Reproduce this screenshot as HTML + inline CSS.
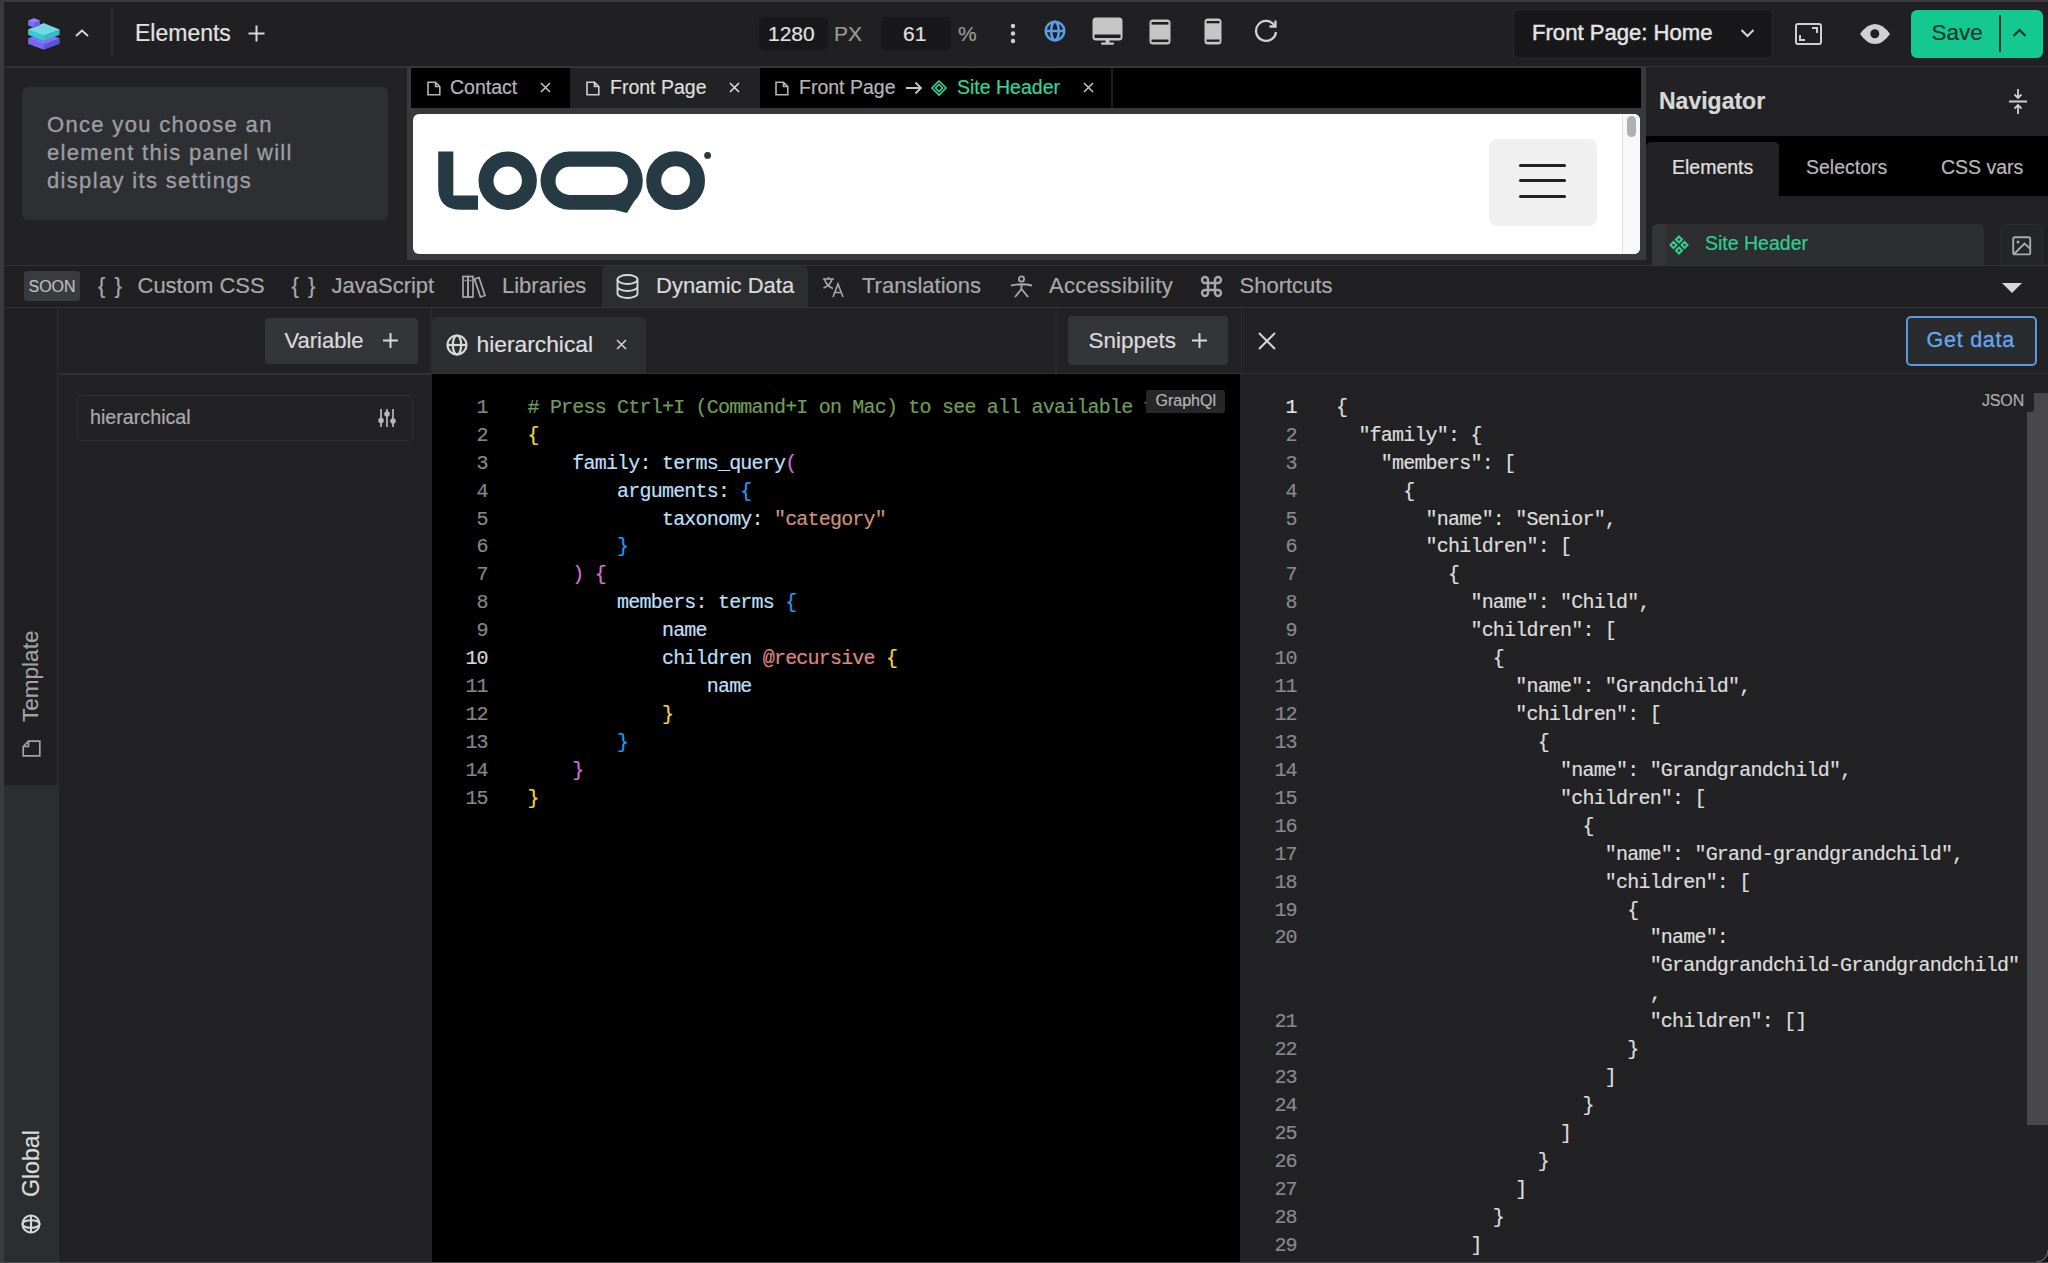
<!DOCTYPE html>
<html><head><meta charset="utf-8">
<style>
*{box-sizing:border-box}
html,body{margin:0;padding:0}
body{width:2048px;height:1263px;overflow:hidden;position:relative;background:#222224;font-family:"Liberation Sans",sans-serif;color:#a9a9ab}
.a{position:absolute}
.t{position:absolute;white-space:nowrap;line-height:1;-webkit-text-stroke:0.2px currentColor}
.m{font-family:"Liberation Mono",monospace}
svg{position:absolute;overflow:visible}
</style></head><body>

<!-- ===== TOP BAR ===== -->
<div class="a" style="left:0;top:0;width:2048px;height:68px;background:#202022;border-bottom:2px solid #333336"></div>
<!-- logo -->
<svg style="left:0;top:0" width="70" height="60" viewBox="0 0 70 60">
  <path d="M43.75 32.5L59.4 38.5V43.8L43.75 49.6L28.3 43.8V38.5Z" fill="#6e64e6"/><path d="M43.75 32.5L59.4 38.5L43.75 44.5L28.3 38.5Z" fill="#7c72f2"/>
  <path d="M28.3 38.5L43.75 44.5V49.6L28.3 43.8Z" fill="#7469ee"/>
  <path d="M59.4 38.5L43.75 44.5V49.6L59.4 43.8Z" fill="#5e52d6"/>
  <path d="M43.75 23.3L59.4 29.6V34.8L43.75 40.6L28.3 34.8V29.6Z" fill="#3ac0cc"/><path d="M43.75 23.3L59.4 29.6L43.75 35.6L28.3 29.6Z" fill="#72d9e2"/>
  <path d="M28.3 29.6L43.75 35.6V40.6L28.3 34.8Z" fill="#38c8d8"/>
  <path d="M59.4 29.6L43.75 35.6V40.6L59.4 34.8Z" fill="#3ab8c4"/>
  <path d="M34 18.3L39.8 20.6V25.3L34 27.5L28.3 25.3V20.6Z" fill="#7268e8"/><path d="M34 18.3L39.8 20.6L34 22.9L28.3 20.6Z" fill="#8a82f4"/>
  <path d="M28.3 20.6L34 22.9V27.5L28.3 25.3Z" fill="#7a70f0"/>
  <path d="M39.8 20.6L34 22.9V27.5L39.8 25.3Z" fill="#6a5fe0"/>
</svg>
<svg style="left:74px;top:28px" width="16" height="10" viewBox="0 0 16 10"><path d="M2 8 L8 2.5 L14 8" fill="none" stroke="#d8d8d8" stroke-width="2"/></svg>
<div class="a" style="left:111px;top:9px;width:2px;height:48px;background:#2e2e31;border-radius:1px"></div>
<div class="t" style="left:135px;top:22px;font-size:23px;color:#e2e2e2">Elements</div>
<svg style="left:247px;top:24px" width="19" height="19" viewBox="0 0 19 19"><path d="M9.5 1.5V17.5M1.5 9.5H17.5" stroke="#d8d8d8" stroke-width="2"/></svg>

<!-- px / zoom -->
<div class="a" style="left:759px;top:17px;width:69px;height:33px;background:#18181a;border-radius:5px"></div>
<div class="t" style="left:768px;top:23px;font-size:21px;color:#e0e0e0">1280</div>
<div class="t" style="left:834px;top:23px;font-size:21px;color:#9a9a9c">PX</div>
<div class="a" style="left:881px;top:17px;width:70px;height:33px;background:#18181a;border-radius:5px"></div>
<div class="t" style="left:903px;top:23px;font-size:21px;color:#e0e0e0">61</div>
<div class="t" style="left:958px;top:23px;font-size:21px;color:#9a9a9c">%</div>
<svg style="left:1009px;top:22px" width="8" height="24" viewBox="0 0 8 24"><circle cx="4" cy="4" r="2.2" fill="#cfcfcf"/><circle cx="4" cy="11.5" r="2.2" fill="#cfcfcf"/><circle cx="4" cy="19" r="2.2" fill="#cfcfcf"/></svg>
<!-- globe -->
<svg style="left:1044px;top:20px" width="22" height="22" viewBox="0 0 22 22" fill="none" stroke="#5b9ee8" stroke-width="2.5"><circle cx="11" cy="11" r="9.3"/><ellipse cx="11" cy="11" rx="3.8" ry="9.3"/><path d="M1.7 11H20.3"/></svg>
<!-- desktop -->
<svg style="left:1092px;top:17px" width="31" height="28" viewBox="0 0 31 28"><rect x="0.5" y="0.5" width="30" height="23" rx="3.5" fill="#c6c6c6"/><rect x="2.5" y="17.5" width="26" height="3.5" fill="#202022"/><rect x="13.5" y="23" width="4" height="3" fill="#c6c6c6"/><rect x="9" y="25.5" width="13" height="2.3" rx="1" fill="#c6c6c6"/></svg>
<!-- tablet -->
<svg style="left:1149px;top:19px" width="22" height="26" viewBox="0 0 22 26"><rect x="0.5" y="0.5" width="21" height="25" rx="3.5" fill="#c6c6c6"/><rect x="2.5" y="3" width="17" height="2.6" fill="#202022"/><rect x="2.5" y="20.5" width="17" height="2.6" fill="#202022"/></svg>
<!-- phone -->
<svg style="left:1204px;top:18px" width="18" height="27" viewBox="0 0 18 27"><rect x="0.5" y="0.5" width="17" height="26" rx="3.5" fill="#c6c6c6"/><rect x="2.5" y="3" width="13" height="2.3" fill="#202022"/><rect x="2.5" y="21.5" width="13" height="2.3" fill="#202022"/></svg>
<!-- refresh -->
<svg style="left:1254px;top:19px" width="26" height="25" viewBox="0 0 26 25" fill="none" stroke="#d2d2d2" stroke-width="2.3"><path d="M20.5 6.5 A10 10 0 1 0 22 13"/><path d="M21.5 1.5 V7.5 H15.5"/></svg>

<!-- page select -->
<div class="a" style="left:1513px;top:9px;width:260px;height:50px;background:#18181a;border:1px solid #2b2b2e;border-radius:6px"></div>
<div class="t" style="left:1532px;top:22px;font-size:22.1px;-webkit-text-stroke:0.45px #e4e4e4;color:#e4e4e4">Front Page: Home</div>
<svg style="left:1740px;top:28px" width="15" height="10" viewBox="0 0 15 10"><path d="M1.5 2 L7.5 8 L13.5 2" fill="none" stroke="#d8d8d8" stroke-width="2"/></svg>
<!-- fullscreen -->
<svg style="left:1795px;top:23px" width="27" height="22" viewBox="0 0 27 22" fill="none" stroke="#cfcfcf" stroke-width="2"><rect x="1" y="1" width="25" height="20" rx="2"/><path d="M5 12V17H10M17 5H22V10"/></svg>
<!-- eye -->
<svg style="left:1859px;top:23px" width="32" height="22" viewBox="0 0 32 22"><path d="M1 11 Q8 1 16 1 Q24 1 31 11 Q24 21 16 21 Q8 21 1 11Z" fill="#d0d0d0"/><circle cx="15.8" cy="10.8" r="4.5" fill="#202022"/></svg>
<!-- save -->
<div class="a" style="left:1911px;top:10px;width:132px;height:48px;background:#14c98f;border-radius:6px"></div>
<div class="t" style="left:1931.5px;top:21.6px;font-size:22.5px;color:#123a2b">Save</div>
<div class="a" style="left:1999px;top:15px;width:2px;height:37px;background:#16352a"></div>
<svg style="left:2012px;top:28px" width="15" height="10" viewBox="0 0 15 10"><path d="M1.5 8 L7.5 2 L13.5 8" fill="none" stroke="#16352a" stroke-width="2.2"/></svg>


<!-- ===== LEFT SETTINGS PANEL ===== -->
<div class="a" style="left:22px;top:87px;width:366px;height:133px;background:#2e2f32;border-radius:6px"></div>
<div class="t" style="left:47px;top:111.3px;font-size:22px;line-height:28px;color:#9c9da3;white-space:normal;width:340px;letter-spacing:1.33px;-webkit-text-stroke:0.35px #9c9da3">Once you choose an<br>element this panel will<br>display its settings</div>

<!-- ===== CANVAS ===== -->
<div class="a" style="left:407px;top:67px;width:1239px;height:193px;background:#38393b"></div>
<div class="a" style="left:411px;top:68px;width:1230px;height:40px;background:#000"></div>
<!-- tab: contact -->
<svg style="left:427px;top:81px" width="14" height="15" viewBox="0 0 14 15" fill="none" stroke="#b3b3b3" stroke-width="1.6"><path d="M1 1.2H8.5L12.8 5.5V13.8H1Z M8.5 1.2V5.5H12.8"/></svg>
<div class="t" style="left:450px;top:78px;font-size:19.5px;color:#b5b5b7">Contact</div>
<svg style="left:540px;top:82px" width="11" height="11" viewBox="0 0 11 11"><path d="M1 1L10 10M10 1L1 10" stroke="#c0c0c0" stroke-width="1.6"/></svg>
<!-- tab: front page active -->
<div class="a" style="left:570px;top:68px;width:190px;height:40px;background:#222224"></div>
<svg style="left:586px;top:81px" width="14" height="15" viewBox="0 0 14 15" fill="none" stroke="#d0d0d0" stroke-width="1.6"><path d="M1 1.2H8.5L12.8 5.5V13.8H1Z M8.5 1.2V5.5H12.8"/></svg>
<div class="t" style="left:610px;top:78px;font-size:19.5px;color:#dedede">Front Page</div>
<svg style="left:729px;top:82px" width="11" height="11" viewBox="0 0 11 11"><path d="M1 1L10 10M10 1L1 10" stroke="#dcdcdc" stroke-width="1.6"/></svg>
<!-- tab: site header -->
<svg style="left:775px;top:81px" width="14" height="15" viewBox="0 0 14 15" fill="none" stroke="#b3b3b3" stroke-width="1.6"><path d="M1 1.2H8.5L12.8 5.5V13.8H1Z M8.5 1.2V5.5H12.8"/></svg>
<div class="t" style="left:799px;top:78px;font-size:19.5px;color:#b5b5b7">Front Page</div>
<svg style="left:905px;top:81px" width="18" height="14" viewBox="0 0 18 14" fill="none" stroke="#c8c8c8" stroke-width="1.8"><path d="M1 7H16M10.5 1.5L16 7L10.5 12.5"/></svg>
<svg style="left:931px;top:80px" width="16" height="16" viewBox="0 0 16 16" fill="none" stroke="#35d399" stroke-width="1.6"><path d="M8 1L15 8L8 15L1 8Z M8 4.5L11.5 8L8 11.5L4.5 8Z"/></svg>
<div class="t" style="left:957px;top:78px;font-size:19.5px;color:#35d399">Site Header</div>
<svg style="left:1083px;top:82px" width="11" height="11" viewBox="0 0 11 11"><path d="M1 1L10 10M10 1L1 10" stroke="#c0c0c0" stroke-width="1.6"/></svg>
<div class="a" style="left:1111px;top:68px;width:2px;height:40px;background:#1c1c1e"></div>
<!-- preview -->
<div class="a" style="left:413px;top:114px;width:1227px;height:140px;background:#fff;border-radius:6px;overflow:hidden">
  <div class="a" style="left:1209px;top:0;width:18px;height:140px;background:#f8f8f8;border-left:1px solid #e4e4e4"></div>
  <div class="a" style="left:1214px;top:2px;width:9px;height:21px;background:#b0b0b0;border-radius:5px"></div>
  <div class="a" style="left:1076px;top:25px;width:108px;height:87px;background:#f0f0f0;border-radius:8px"></div>
  <div class="a" style="left:1106px;top:50px;width:47px;height:3px;background:#222;border-radius:2px"></div>
  <div class="a" style="left:1106px;top:65px;width:47px;height:3px;background:#222;border-radius:2px"></div>
  <div class="a" style="left:1106px;top:81px;width:47px;height:3px;background:#222;border-radius:2px"></div>
</div>
<!-- logo LOQO -->
<svg style="left:437px;top:150px" width="280" height="66" viewBox="437 150 280 66">
  <path d="M438.2 151.6H453.3V195.4H478V209.8H461Q438.2 209.8 438.2 187Z" fill="#263a43"/>
  <circle cx="507.7" cy="180.7" r="21.7" fill="none" stroke="#263a43" stroke-width="15"/>
  <path d="M569.6 151.6H613.8A29.1 29.1 0 0 1 642.8 180.7A29.1 29.1 0 0 1 634 201.5L627 213L614 209.8H569.6A29.1 29.1 0 0 1 569.6 151.6Z M569.6 166.8A14.1 14.1 0 0 0 569.6 195H613.8A14.1 14.1 0 0 0 613.8 166.8Z" fill="#263a43" fill-rule="evenodd"/>
  <circle cx="675.6" cy="180.7" r="21.9" fill="none" stroke="#263a43" stroke-width="15"/>
  <circle cx="707.6" cy="155.4" r="3.4" fill="#263a43"/>
</svg>

<!-- ===== NAVIGATOR ===== -->
<div class="a" style="left:1646px;top:67px;width:402px;height:198px;background:#222224"></div>
<div class="t" style="left:1659px;top:89.5px;font-size:23px;font-weight:bold;color:#d8d8d8">Navigator</div>
<svg style="left:2008px;top:88px" width="20" height="27" viewBox="0 0 20 27" fill="none" stroke="#cfcfcf" stroke-width="1.8"><path d="M1 13.5H19M10 1V10M6.5 6.5L10 10L13.5 6.5M10 26V17M6.5 20.5L10 17L13.5 20.5"/></svg>
<div class="a" style="left:1646px;top:136px;width:402px;height:60px;background:#000"></div>
<div class="a" style="left:1646px;top:142px;width:133px;height:54px;background:#222224;border-radius:5px 5px 0 0"></div>
<div class="t" style="left:1672px;top:158px;font-size:19.5px;color:#e0e0e0">Elements</div>
<div class="t" style="left:1806px;top:158px;font-size:19.5px;color:#b8b8ba">Selectors</div>
<div class="t" style="left:1941px;top:158px;font-size:19.5px;color:#b8b8ba">CSS vars</div>
<div class="a" style="left:1652px;top:224px;width:332px;height:44px;background:#2d2e30;border-radius:6px 6px 0 0"></div>
<div class="a" style="left:1652px;top:224px;width:14px;height:44px;background:#333437;border-radius:6px 0 0 0"></div>
<svg style="left:1669px;top:235px" width="20" height="20" viewBox="0 0 20 20" fill="none" stroke="#2fce8f" stroke-width="2"><path d="M10 1.5L13 4.5L10 7.5L7 4.5Z M10 12.5L13 15.5L10 18.5L7 15.5Z M4.5 7L7.5 10L4.5 13L1.5 10Z M15.5 7L18.5 10L15.5 13L12.5 10Z"/></svg>
<div class="t" style="left:1705px;top:234px;font-size:19.5px;color:#2fce8f">Site Header</div>
<div class="a" style="left:2000px;top:224px;width:43px;height:44px;background:#242527;border-radius:5px;border:1px solid #2b2c2e"></div>
<svg style="left:2012px;top:236px" width="20" height="20" viewBox="0 0 20 20" fill="none" stroke="#ababaf" stroke-width="1.9"><rect x="1.2" y="1.2" width="17" height="17.2" rx="1.5"/><path d="M2 18L12.5 7.5L18 12.5"/><circle cx="6" cy="6" r="1.5" fill="#ababaf" stroke="none"/></svg>


<!-- ===== BOTTOM TOOLBAR ===== -->
<div class="a" style="left:0;top:264.5px;width:2048px;height:43.5px;background:#202022;border-top:1.5px solid #343437;border-bottom:1.5px solid #343437"></div>
<div class="a" style="left:24px;top:271px;width:56px;height:30px;background:#3a3b3e;border-radius:3px"></div>
<div class="t" style="left:28.5px;top:278.5px;font-size:16px;color:#bdbdbf">SOON</div>
<div class="t" style="left:98px;top:274.5px;font-size:22px;color:#a9a9ab;letter-spacing:1.5px">{ }</div>
<div class="t" style="left:137.5px;top:274.5px;font-size:22px;color:#a9a9ab">Custom CSS</div>
<div class="t" style="left:291.5px;top:274.5px;font-size:22px;color:#a9a9ab;letter-spacing:1.5px">{ }</div>
<div class="t" style="left:331.5px;top:274.5px;font-size:22px;color:#a9a9ab">JavaScript</div>
<svg style="left:462px;top:275px" width="24" height="23" viewBox="0 0 24 23" fill="none" stroke="#a9a9ab" stroke-width="1.7"><rect x="1" y="1.5" width="5" height="20.5"/><rect x="6" y="1.5" width="5" height="20.5"/><path d="M2.5 5.5H4.5M7.5 5.5H9.5"/><path d="M12.5 4L17 2.5L23 20.5L18.5 22Z"/></svg>
<div class="t" style="left:502px;top:274.5px;font-size:22px;color:#a9a9ab">Libraries</div>
<div class="a" style="left:602px;top:266px;width:206px;height:41px;background:#2c2d2f;border-radius:5px 5px 0 0"></div>
<svg style="left:616px;top:274px" width="23" height="25" viewBox="0 0 23 25" fill="none" stroke="#d6d6d6" stroke-width="1.9"><ellipse cx="11.5" cy="5.5" rx="10" ry="4.5"/><path d="M1.5 5.5V19.5C1.5 22 6 24 11.5 24C17 24 21.5 22 21.5 19.5V5.5M1.5 12.5C1.5 15 6 17 11.5 17C17 17 21.5 15 21.5 12.5"/></svg>
<div class="t" style="left:656px;top:274.5px;font-size:22px;color:#dadadc">Dynamic Data</div>
<svg style="left:822px;top:276px" width="23" height="22" viewBox="0 0 23 22" fill="none" stroke="#a9a9ab" stroke-width="1.6"><path d="M1 3H12M6.5 1V3M2.5 3C4 8 7 11 11 12.5M10 3C9 7 5.5 10.5 1.5 12M11 21L16 8L21 21M12.8 16.5H19.2"/></svg>
<div class="t" style="left:862px;top:274.5px;font-size:22px;color:#a9a9ab">Translations</div>
<svg style="left:1010px;top:275px" width="23" height="23" viewBox="0 0 23 23" fill="none" stroke="#a9a9ab" stroke-width="1.8"><circle cx="11.5" cy="4" r="2.6"/><path d="M1 10.5Q11.5 8 22 10.5M11.5 9.5V14M11.5 14L5 22M11.5 14L18 22"/></svg>
<div class="t" style="left:1049px;top:274.5px;font-size:22px;color:#a9a9ab;letter-spacing:0.33px">Accessibility</div>
<svg style="left:1200px;top:275px" width="23" height="23" viewBox="0 0 23 23" fill="none" stroke="#a9a9ab" stroke-width="2.4"><path d="M8 8V15M15 8V15M8 8H15M8 15H15M8 8H5A3 3 0 1 1 8 5ZM15 8H18A3 3 0 1 0 15 5ZM8 15H5A3 3 0 1 0 8 18ZM15 15H18A3 3 0 1 1 15 18Z"/></svg>
<div class="t" style="left:1239.5px;top:274.5px;font-size:22px;color:#a9a9ab">Shortcuts</div>
<svg style="left:2001px;top:282px" width="22" height="12" viewBox="0 0 22 12"><path d="M1 1H21L11 11Z" fill="#d8d8d8"/></svg>

<!-- ===== DYNAMIC DATA PANEL ===== -->
<!-- left vertical strip -->
<div class="a" style="left:0;top:308px;width:58px;height:955px;background:#202022;border-right:1.5px solid #313134"></div>
<div class="a" style="left:0;top:785px;width:59px;height:478px;background:#2c2d2f"></div>
<div class="t" style="left:-19px;top:664.5px;font-size:22.5px;color:#a3a3a5;transform:rotate(-90deg);transform-origin:center center;width:100px;text-align:center">Template</div>
<svg style="left:22px;top:740px" width="19" height="17" viewBox="0 0 19 17" fill="none" stroke="#a3a3a5" stroke-width="1.7"><path d="M1.2 15.8H17.8V1.2H6.5L1.2 6.5Z M1.2 6.5H6.5V1.2"/></svg>
<div class="t" style="left:-18px;top:1152px;font-size:23.2px;color:#d8d8d8;transform:rotate(-90deg);transform-origin:center center;width:100px;text-align:center">Global</div>
<svg style="left:21px;top:1214px" width="20" height="20" viewBox="0 0 20 20" fill="none" stroke="#d6d6d6" stroke-width="2.1"><circle cx="10" cy="10" r="8.5"/><ellipse cx="10" cy="10" rx="8.5" ry="3.8"/><path d="M10 1.5V18.5"/></svg>

<!-- variables column -->
<div class="a" style="left:59px;top:373px;width:372px;height:1.5px;background:#313134"></div>
<div class="a" style="left:265px;top:318px;width:153px;height:46px;background:#343538;border-radius:4px"></div>
<div class="t" style="left:284.5px;top:329.5px;font-size:22px;color:#dadadc">Variable</div>
<svg style="left:382px;top:332px" width="17" height="17" viewBox="0 0 17 17"><path d="M8.5 1V16M1 8.5H16" stroke="#d8d8d8" stroke-width="2"/></svg>
<div class="a" style="left:77px;top:395px;width:336px;height:46px;border:1.5px solid #2f3032;border-radius:5px"></div>
<div class="t" style="left:90px;top:407.5px;font-size:19.7px;color:#ababad">hierarchical</div>
<svg style="left:378px;top:408px" width="18" height="20" viewBox="0 0 18 20" fill="none" stroke="#b8b8ba" stroke-width="1.7"><path d="M3 1V19M9 1V19M15 1V19"/><circle cx="3" cy="12.5" r="1.9" fill="#b8b8ba"/><circle cx="9" cy="6" r="1.9" fill="#b8b8ba"/><circle cx="15" cy="13" r="1.9" fill="#b8b8ba"/></svg>
<div class="a" style="left:430px;top:308px;width:1.5px;height:66px;background:#2a2a2d"></div>

<!-- editor tab header -->
<div class="a" style="left:431.5px;top:317px;width:214px;height:56px;background:#2d2e30;border-radius:5px 5px 0 0"></div>
<svg style="left:446px;top:334px" width="22" height="22" viewBox="0 0 22 22" fill="none" stroke="#d8d8d8" stroke-width="2.2"><circle cx="11" cy="11" r="9.5"/><ellipse cx="11" cy="11" rx="4.2" ry="9.5"/><path d="M1.5 11H20.5"/></svg>
<div class="t" style="left:476.5px;top:333px;font-size:22.8px;color:#dedee0">hierarchical</div>
<svg style="left:616px;top:339px" width="11" height="11" viewBox="0 0 11 11"><path d="M1 1L10 10M10 1L1 10" stroke="#d0d0d0" stroke-width="1.6"/></svg>
<div class="a" style="left:1055px;top:308px;width:1.5px;height:66px;background:#2a2a2d"></div>
<div class="a" style="left:1068px;top:316px;width:160px;height:49px;background:#343538;border-radius:4px"></div>
<div class="t" style="left:1088.5px;top:330px;font-size:22.5px;color:#dadadc">Snippets</div>
<svg style="left:1191px;top:332px" width="17" height="17" viewBox="0 0 17 17"><path d="M8.5 1V16M1 8.5H16" stroke="#d8d8d8" stroke-width="2"/></svg>
<div class="a" style="left:1240.5px;top:308px;width:1.5px;height:66px;background:#2a2a2d"></div>
<div class="a" style="left:431.5px;top:372.5px;width:1617px;height:1.5px;background:#313134"></div>

<!-- graphql editor -->
<div class="a" style="left:431.5px;top:374px;width:808.5px;height:889px;background:#000"></div>

<!-- json panel -->
<svg style="left:1258px;top:332px" width="18" height="18" viewBox="0 0 18 18"><path d="M1 1L17 17M17 1L1 17" stroke="#d4d4d4" stroke-width="2"/></svg>
<div class="a" style="left:1906px;top:315.5px;width:131px;height:50px;background:#2a2b2d;border:2px solid #5b9ae0;border-radius:5px"></div>
<div class="t" style="left:1926.5px;top:329.5px;font-size:21.5px;letter-spacing:0.75px;color:#64a6f0;-webkit-text-stroke:0.3px #64a6f0">Get data</div>
<div class="a" style="left:2027px;top:393px;width:21px;height:732px;background:#48484a;border-radius:3px 0 0 0"></div>
<div class="a" style="left:1976px;top:391px;width:57.5px;height:21px;background:#222224;border-radius:0 0 3px 0"></div>
<div class="t" style="left:1982px;top:392.6px;font-size:16px;letter-spacing:-0.15px;color:#acacb0">JSON</div>

<!-- CODE START -->
<!-- code: graphql -->
<div class="a m" style="left:431.5px;top:374px;width:808.5px;height:889px;overflow:hidden">
<div class="t" style="left:16.3px;top:19.80px;width:40px;text-align:right;font-size:20px;line-height:27.93px;letter-spacing:-0.8px;color:#858587">1</div>
<div class="t" style="left:96.0px;top:19.80px;font-size:20px;line-height:27.93px;letter-spacing:-0.8px;white-space:pre"><span style="color:#6f9c5b"># Press Ctrl+I (Command+I on Mac) to see all available fields</span></div>
<div class="t" style="left:16.3px;top:47.73px;width:40px;text-align:right;font-size:20px;line-height:27.93px;letter-spacing:-0.8px;color:#858587">2</div>
<div class="t" style="left:96.0px;top:47.73px;font-size:20px;line-height:27.93px;letter-spacing:-0.8px;white-space:pre"><span style="color:#f5d53a">{</span></div>
<div class="t" style="left:16.3px;top:75.66px;width:40px;text-align:right;font-size:20px;line-height:27.93px;letter-spacing:-0.8px;color:#858587">3</div>
<div class="t" style="left:96.0px;top:75.66px;font-size:20px;line-height:27.93px;letter-spacing:-0.8px;white-space:pre"><span style="color:#bcdff8">    family</span><span style="color:#d4d4d4">: </span><span style="color:#bcdff8">terms_query</span><span style="color:#d66fd6">(</span></div>
<div class="t" style="left:16.3px;top:103.59px;width:40px;text-align:right;font-size:20px;line-height:27.93px;letter-spacing:-0.8px;color:#858587">4</div>
<div class="t" style="left:96.0px;top:103.59px;font-size:20px;line-height:27.93px;letter-spacing:-0.8px;white-space:pre"><span style="color:#bcdff8">        arguments</span><span style="color:#d4d4d4">: </span><span style="color:#1f9cf0">{</span></div>
<div class="t" style="left:16.3px;top:131.52px;width:40px;text-align:right;font-size:20px;line-height:27.93px;letter-spacing:-0.8px;color:#858587">5</div>
<div class="t" style="left:96.0px;top:131.52px;font-size:20px;line-height:27.93px;letter-spacing:-0.8px;white-space:pre"><span style="color:#bcdff8">            taxonomy</span><span style="color:#d4d4d4">: </span><span style="color:#ce9178">&quot;category&quot;</span></div>
<div class="t" style="left:16.3px;top:159.45px;width:40px;text-align:right;font-size:20px;line-height:27.93px;letter-spacing:-0.8px;color:#858587">6</div>
<div class="t" style="left:96.0px;top:159.45px;font-size:20px;line-height:27.93px;letter-spacing:-0.8px;white-space:pre"><span style="color:#1f9cf0">        }</span></div>
<div class="t" style="left:16.3px;top:187.38px;width:40px;text-align:right;font-size:20px;line-height:27.93px;letter-spacing:-0.8px;color:#858587">7</div>
<div class="t" style="left:96.0px;top:187.38px;font-size:20px;line-height:27.93px;letter-spacing:-0.8px;white-space:pre"><span style="color:#d66fd6">    ) {</span></div>
<div class="t" style="left:16.3px;top:215.31px;width:40px;text-align:right;font-size:20px;line-height:27.93px;letter-spacing:-0.8px;color:#858587">8</div>
<div class="t" style="left:96.0px;top:215.31px;font-size:20px;line-height:27.93px;letter-spacing:-0.8px;white-space:pre"><span style="color:#bcdff8">        members</span><span style="color:#d4d4d4">: </span><span style="color:#bcdff8">terms </span><span style="color:#1f9cf0">{</span></div>
<div class="t" style="left:16.3px;top:243.24px;width:40px;text-align:right;font-size:20px;line-height:27.93px;letter-spacing:-0.8px;color:#858587">9</div>
<div class="t" style="left:96.0px;top:243.24px;font-size:20px;line-height:27.93px;letter-spacing:-0.8px;white-space:pre"><span style="color:#bcdff8">            name</span></div>
<div class="t" style="left:16.3px;top:271.17px;width:40px;text-align:right;font-size:20px;line-height:27.93px;letter-spacing:-0.8px;color:#d6d6d6">10</div>
<div class="t" style="left:96.0px;top:271.17px;font-size:20px;line-height:27.93px;letter-spacing:-0.8px;white-space:pre"><span style="color:#bcdff8">            children </span><span style="color:#de8580">@recursive </span><span style="color:#f5d53a">{</span></div>
<div class="t" style="left:16.3px;top:299.10px;width:40px;text-align:right;font-size:20px;line-height:27.93px;letter-spacing:-0.8px;color:#858587">11</div>
<div class="t" style="left:96.0px;top:299.10px;font-size:20px;line-height:27.93px;letter-spacing:-0.8px;white-space:pre"><span style="color:#bcdff8">                name</span></div>
<div class="t" style="left:16.3px;top:327.03px;width:40px;text-align:right;font-size:20px;line-height:27.93px;letter-spacing:-0.8px;color:#858587">12</div>
<div class="t" style="left:96.0px;top:327.03px;font-size:20px;line-height:27.93px;letter-spacing:-0.8px;white-space:pre"><span style="color:#f5d53a">            }</span></div>
<div class="t" style="left:16.3px;top:354.96px;width:40px;text-align:right;font-size:20px;line-height:27.93px;letter-spacing:-0.8px;color:#858587">13</div>
<div class="t" style="left:96.0px;top:354.96px;font-size:20px;line-height:27.93px;letter-spacing:-0.8px;white-space:pre"><span style="color:#1f9cf0">        }</span></div>
<div class="t" style="left:16.3px;top:382.89px;width:40px;text-align:right;font-size:20px;line-height:27.93px;letter-spacing:-0.8px;color:#858587">14</div>
<div class="t" style="left:96.0px;top:382.89px;font-size:20px;line-height:27.93px;letter-spacing:-0.8px;white-space:pre"><span style="color:#d66fd6">    }</span></div>
<div class="t" style="left:16.3px;top:410.82px;width:40px;text-align:right;font-size:20px;line-height:27.93px;letter-spacing:-0.8px;color:#858587">15</div>
<div class="t" style="left:96.0px;top:410.82px;font-size:20px;line-height:27.93px;letter-spacing:-0.8px;white-space:pre"><span style="color:#f5d53a">}</span></div>
</div>
<div class="a" style="left:1146px;top:390px;width:79px;height:23px;background:#262628;border-radius:3px"></div>
<div class="t" style="left:1155.5px;top:393.2px;font-size:16px;color:#b4b4b6">GraphQl</div>
<!-- code: json -->
<div class="a m" style="left:1242px;top:374px;width:785px;height:889px;overflow:hidden">
<div class="t" style="left:14.8px;top:19.80px;width:40px;text-align:right;font-size:20px;line-height:27.93px;letter-spacing:-0.8px;color:#e2e2e2">1</div>
<div class="t" style="left:94.0px;top:19.80px;font-size:20px;line-height:27.93px;letter-spacing:-0.8px;white-space:pre;color:#dcdcdc">{</div>
<div class="t" style="left:14.8px;top:47.73px;width:40px;text-align:right;font-size:20px;line-height:27.93px;letter-spacing:-0.8px;color:#89898b">2</div>
<div class="t" style="left:94.0px;top:47.73px;font-size:20px;line-height:27.93px;letter-spacing:-0.8px;white-space:pre;color:#dcdcdc">  &quot;family&quot;: {</div>
<div class="t" style="left:14.8px;top:75.66px;width:40px;text-align:right;font-size:20px;line-height:27.93px;letter-spacing:-0.8px;color:#89898b">3</div>
<div class="t" style="left:94.0px;top:75.66px;font-size:20px;line-height:27.93px;letter-spacing:-0.8px;white-space:pre;color:#dcdcdc">    &quot;members&quot;: [</div>
<div class="t" style="left:14.8px;top:103.59px;width:40px;text-align:right;font-size:20px;line-height:27.93px;letter-spacing:-0.8px;color:#89898b">4</div>
<div class="t" style="left:94.0px;top:103.59px;font-size:20px;line-height:27.93px;letter-spacing:-0.8px;white-space:pre;color:#dcdcdc">      {</div>
<div class="t" style="left:14.8px;top:131.52px;width:40px;text-align:right;font-size:20px;line-height:27.93px;letter-spacing:-0.8px;color:#89898b">5</div>
<div class="t" style="left:94.0px;top:131.52px;font-size:20px;line-height:27.93px;letter-spacing:-0.8px;white-space:pre;color:#dcdcdc">        &quot;name&quot;: &quot;Senior&quot;,</div>
<div class="t" style="left:14.8px;top:159.45px;width:40px;text-align:right;font-size:20px;line-height:27.93px;letter-spacing:-0.8px;color:#89898b">6</div>
<div class="t" style="left:94.0px;top:159.45px;font-size:20px;line-height:27.93px;letter-spacing:-0.8px;white-space:pre;color:#dcdcdc">        &quot;children&quot;: [</div>
<div class="t" style="left:14.8px;top:187.38px;width:40px;text-align:right;font-size:20px;line-height:27.93px;letter-spacing:-0.8px;color:#89898b">7</div>
<div class="t" style="left:94.0px;top:187.38px;font-size:20px;line-height:27.93px;letter-spacing:-0.8px;white-space:pre;color:#dcdcdc">          {</div>
<div class="t" style="left:14.8px;top:215.31px;width:40px;text-align:right;font-size:20px;line-height:27.93px;letter-spacing:-0.8px;color:#89898b">8</div>
<div class="t" style="left:94.0px;top:215.31px;font-size:20px;line-height:27.93px;letter-spacing:-0.8px;white-space:pre;color:#dcdcdc">            &quot;name&quot;: &quot;Child&quot;,</div>
<div class="t" style="left:14.8px;top:243.24px;width:40px;text-align:right;font-size:20px;line-height:27.93px;letter-spacing:-0.8px;color:#89898b">9</div>
<div class="t" style="left:94.0px;top:243.24px;font-size:20px;line-height:27.93px;letter-spacing:-0.8px;white-space:pre;color:#dcdcdc">            &quot;children&quot;: [</div>
<div class="t" style="left:14.8px;top:271.17px;width:40px;text-align:right;font-size:20px;line-height:27.93px;letter-spacing:-0.8px;color:#89898b">10</div>
<div class="t" style="left:94.0px;top:271.17px;font-size:20px;line-height:27.93px;letter-spacing:-0.8px;white-space:pre;color:#dcdcdc">              {</div>
<div class="t" style="left:14.8px;top:299.10px;width:40px;text-align:right;font-size:20px;line-height:27.93px;letter-spacing:-0.8px;color:#89898b">11</div>
<div class="t" style="left:94.0px;top:299.10px;font-size:20px;line-height:27.93px;letter-spacing:-0.8px;white-space:pre;color:#dcdcdc">                &quot;name&quot;: &quot;Grandchild&quot;,</div>
<div class="t" style="left:14.8px;top:327.03px;width:40px;text-align:right;font-size:20px;line-height:27.93px;letter-spacing:-0.8px;color:#89898b">12</div>
<div class="t" style="left:94.0px;top:327.03px;font-size:20px;line-height:27.93px;letter-spacing:-0.8px;white-space:pre;color:#dcdcdc">                &quot;children&quot;: [</div>
<div class="t" style="left:14.8px;top:354.96px;width:40px;text-align:right;font-size:20px;line-height:27.93px;letter-spacing:-0.8px;color:#89898b">13</div>
<div class="t" style="left:94.0px;top:354.96px;font-size:20px;line-height:27.93px;letter-spacing:-0.8px;white-space:pre;color:#dcdcdc">                  {</div>
<div class="t" style="left:14.8px;top:382.89px;width:40px;text-align:right;font-size:20px;line-height:27.93px;letter-spacing:-0.8px;color:#89898b">14</div>
<div class="t" style="left:94.0px;top:382.89px;font-size:20px;line-height:27.93px;letter-spacing:-0.8px;white-space:pre;color:#dcdcdc">                    &quot;name&quot;: &quot;Grandgrandchild&quot;,</div>
<div class="t" style="left:14.8px;top:410.82px;width:40px;text-align:right;font-size:20px;line-height:27.93px;letter-spacing:-0.8px;color:#89898b">15</div>
<div class="t" style="left:94.0px;top:410.82px;font-size:20px;line-height:27.93px;letter-spacing:-0.8px;white-space:pre;color:#dcdcdc">                    &quot;children&quot;: [</div>
<div class="t" style="left:14.8px;top:438.75px;width:40px;text-align:right;font-size:20px;line-height:27.93px;letter-spacing:-0.8px;color:#89898b">16</div>
<div class="t" style="left:94.0px;top:438.75px;font-size:20px;line-height:27.93px;letter-spacing:-0.8px;white-space:pre;color:#dcdcdc">                      {</div>
<div class="t" style="left:14.8px;top:466.68px;width:40px;text-align:right;font-size:20px;line-height:27.93px;letter-spacing:-0.8px;color:#89898b">17</div>
<div class="t" style="left:94.0px;top:466.68px;font-size:20px;line-height:27.93px;letter-spacing:-0.8px;white-space:pre;color:#dcdcdc">                        &quot;name&quot;: &quot;Grand-grandgrandchild&quot;,</div>
<div class="t" style="left:14.8px;top:494.61px;width:40px;text-align:right;font-size:20px;line-height:27.93px;letter-spacing:-0.8px;color:#89898b">18</div>
<div class="t" style="left:94.0px;top:494.61px;font-size:20px;line-height:27.93px;letter-spacing:-0.8px;white-space:pre;color:#dcdcdc">                        &quot;children&quot;: [</div>
<div class="t" style="left:14.8px;top:522.54px;width:40px;text-align:right;font-size:20px;line-height:27.93px;letter-spacing:-0.8px;color:#89898b">19</div>
<div class="t" style="left:94.0px;top:522.54px;font-size:20px;line-height:27.93px;letter-spacing:-0.8px;white-space:pre;color:#dcdcdc">                          {</div>
<div class="t" style="left:14.8px;top:550.47px;width:40px;text-align:right;font-size:20px;line-height:27.93px;letter-spacing:-0.8px;color:#89898b">20</div>
<div class="t" style="left:94.0px;top:550.47px;font-size:20px;line-height:27.93px;letter-spacing:-0.8px;white-space:pre;color:#dcdcdc">                            &quot;name&quot;:</div>
<div class="t" style="left:94.0px;top:578.40px;font-size:20px;line-height:27.93px;letter-spacing:-0.8px;white-space:pre;color:#dcdcdc">                            &quot;Grandgrandchild-Grandgrandchild&quot;</div>
<div class="t" style="left:94.0px;top:606.33px;font-size:20px;line-height:27.93px;letter-spacing:-0.8px;white-space:pre;color:#dcdcdc">                            ,</div>
<div class="t" style="left:14.8px;top:634.26px;width:40px;text-align:right;font-size:20px;line-height:27.93px;letter-spacing:-0.8px;color:#89898b">21</div>
<div class="t" style="left:94.0px;top:634.26px;font-size:20px;line-height:27.93px;letter-spacing:-0.8px;white-space:pre;color:#dcdcdc">                            &quot;children&quot;: []</div>
<div class="t" style="left:14.8px;top:662.19px;width:40px;text-align:right;font-size:20px;line-height:27.93px;letter-spacing:-0.8px;color:#89898b">22</div>
<div class="t" style="left:94.0px;top:662.19px;font-size:20px;line-height:27.93px;letter-spacing:-0.8px;white-space:pre;color:#dcdcdc">                          }</div>
<div class="t" style="left:14.8px;top:690.12px;width:40px;text-align:right;font-size:20px;line-height:27.93px;letter-spacing:-0.8px;color:#89898b">23</div>
<div class="t" style="left:94.0px;top:690.12px;font-size:20px;line-height:27.93px;letter-spacing:-0.8px;white-space:pre;color:#dcdcdc">                        ]</div>
<div class="t" style="left:14.8px;top:718.05px;width:40px;text-align:right;font-size:20px;line-height:27.93px;letter-spacing:-0.8px;color:#89898b">24</div>
<div class="t" style="left:94.0px;top:718.05px;font-size:20px;line-height:27.93px;letter-spacing:-0.8px;white-space:pre;color:#dcdcdc">                      }</div>
<div class="t" style="left:14.8px;top:745.98px;width:40px;text-align:right;font-size:20px;line-height:27.93px;letter-spacing:-0.8px;color:#89898b">25</div>
<div class="t" style="left:94.0px;top:745.98px;font-size:20px;line-height:27.93px;letter-spacing:-0.8px;white-space:pre;color:#dcdcdc">                    ]</div>
<div class="t" style="left:14.8px;top:773.91px;width:40px;text-align:right;font-size:20px;line-height:27.93px;letter-spacing:-0.8px;color:#89898b">26</div>
<div class="t" style="left:94.0px;top:773.91px;font-size:20px;line-height:27.93px;letter-spacing:-0.8px;white-space:pre;color:#dcdcdc">                  }</div>
<div class="t" style="left:14.8px;top:801.84px;width:40px;text-align:right;font-size:20px;line-height:27.93px;letter-spacing:-0.8px;color:#89898b">27</div>
<div class="t" style="left:94.0px;top:801.84px;font-size:20px;line-height:27.93px;letter-spacing:-0.8px;white-space:pre;color:#dcdcdc">                ]</div>
<div class="t" style="left:14.8px;top:829.77px;width:40px;text-align:right;font-size:20px;line-height:27.93px;letter-spacing:-0.8px;color:#89898b">28</div>
<div class="t" style="left:94.0px;top:829.77px;font-size:20px;line-height:27.93px;letter-spacing:-0.8px;white-space:pre;color:#dcdcdc">              }</div>
<div class="t" style="left:14.8px;top:857.70px;width:40px;text-align:right;font-size:20px;line-height:27.93px;letter-spacing:-0.8px;color:#89898b">29</div>
<div class="t" style="left:94.0px;top:857.70px;font-size:20px;line-height:27.93px;letter-spacing:-0.8px;white-space:pre;color:#dcdcdc">            ]</div>
<div class="t" style="left:14.8px;top:885.63px;width:40px;text-align:right;font-size:20px;line-height:27.93px;letter-spacing:-0.8px;color:#89898b">30</div>
<div class="t" style="left:94.0px;top:885.63px;font-size:20px;line-height:27.93px;letter-spacing:-0.8px;white-space:pre;color:#dcdcdc">          }</div>
</div>
<!-- CODE END -->
<!-- window frame -->
<svg style="left:2034px;top:1249px" width="14" height="14" viewBox="0 0 14 14"><path d="M14 0.5 A12.5 12.5 0 0 1 1.5 13 L0 13 L0 14 L14 14Z" fill="#151516"/><path d="M14 1 A12 12 0 0 1 2 13" fill="none" stroke="#5a5a5c" stroke-width="1.5"/></svg>

<div class="a" style="left:0;top:0;width:2048px;height:2px;background:#3a3a3c"></div>
<div class="a" style="left:0;top:0;width:3.5px;height:1263px;background:#3b3b3d"></div>
<div class="a" style="left:0;top:1261.5px;width:2048px;height:1.5px;background:#4a4a4c"></div>

</body></html>
